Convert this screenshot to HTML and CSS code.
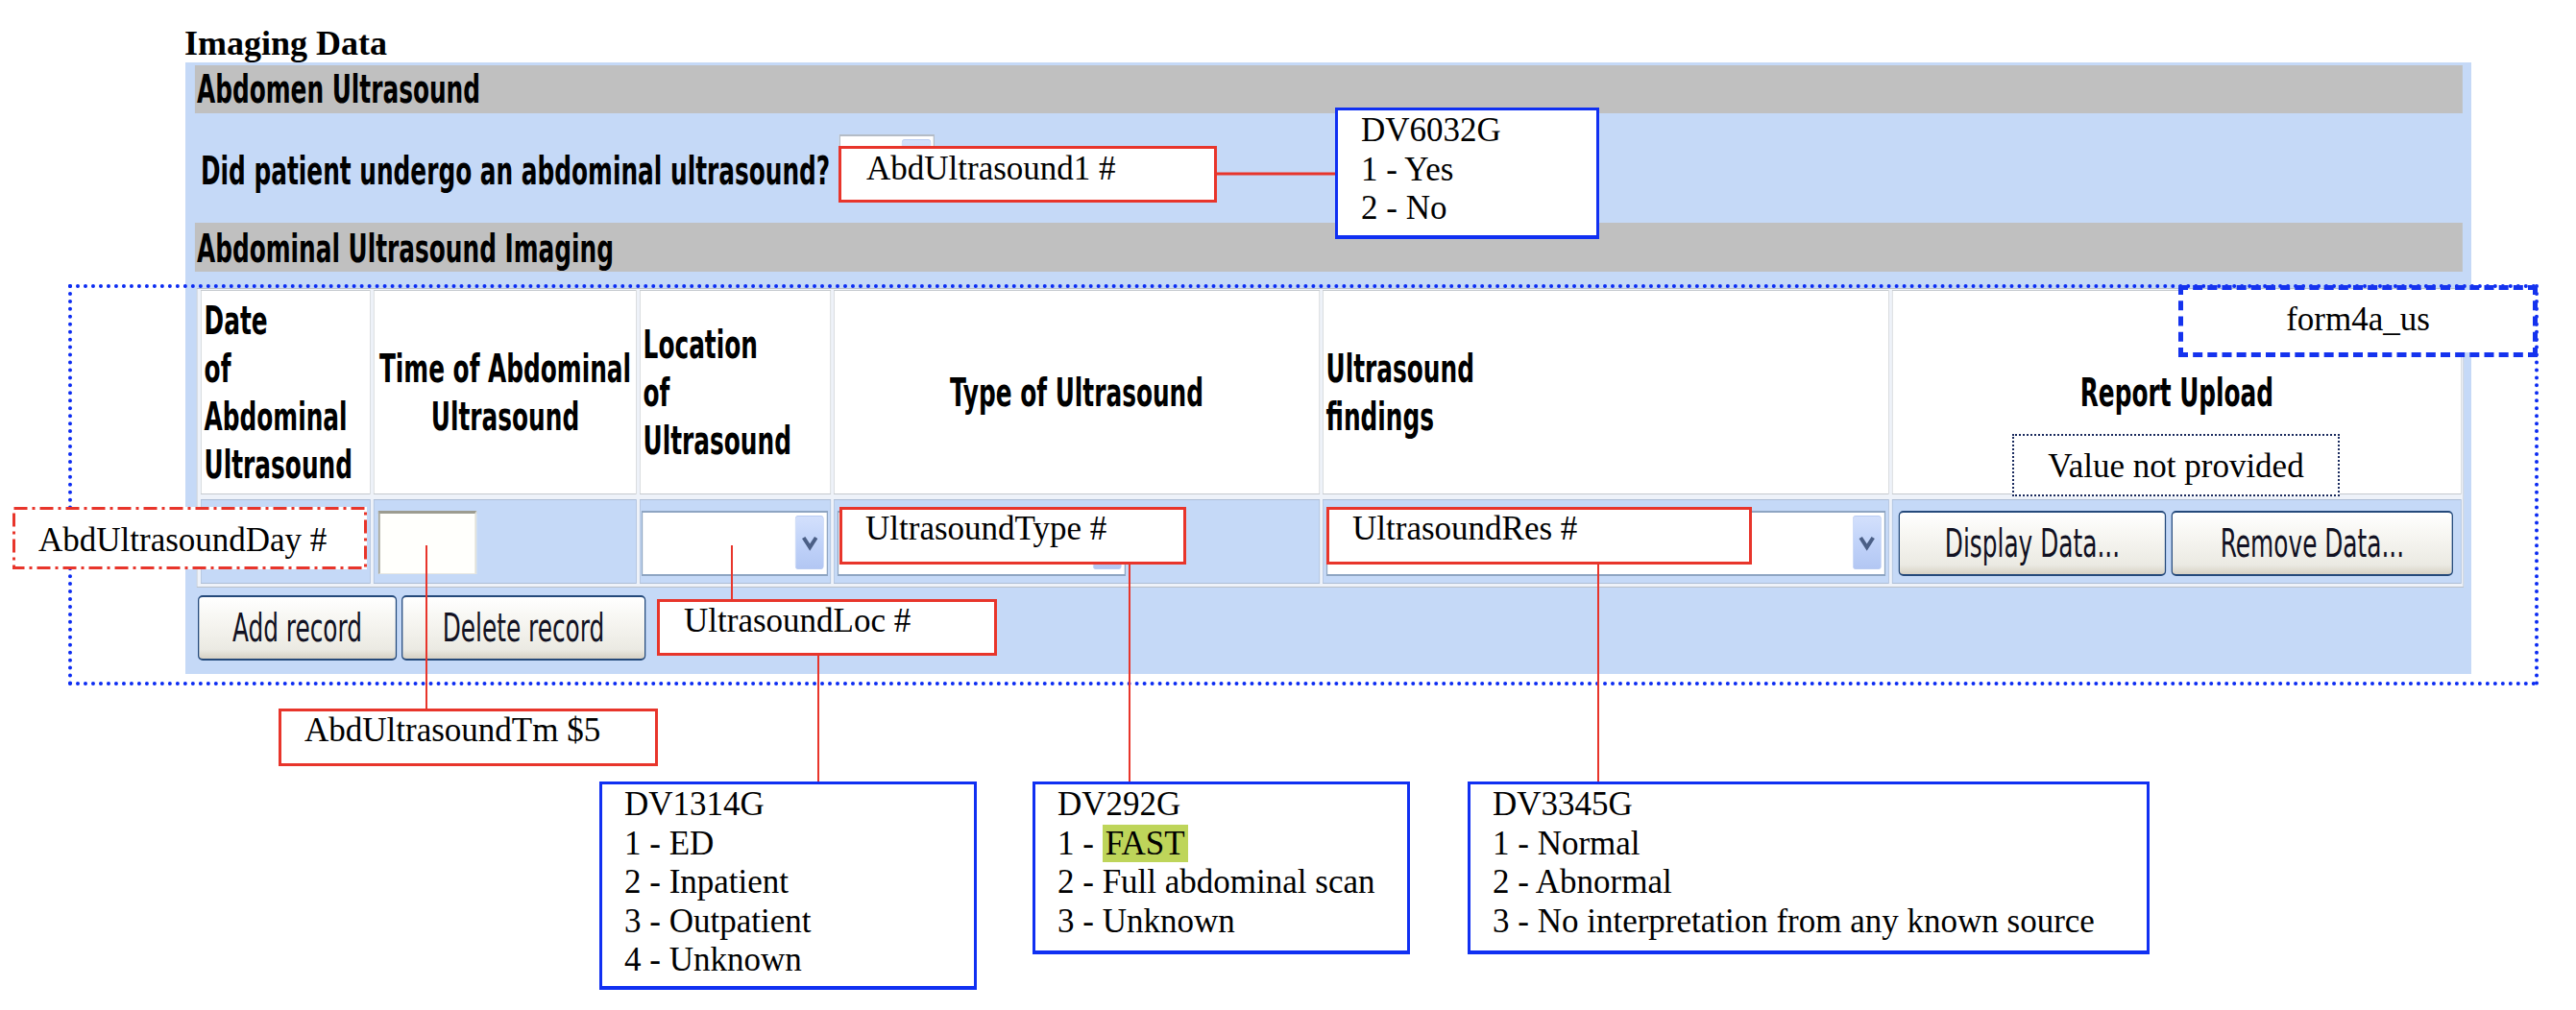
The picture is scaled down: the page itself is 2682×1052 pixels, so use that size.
FILE: index.html
```html
<!DOCTYPE html>
<html>
<head>
<meta charset="utf-8">
<title>Imaging Data</title>
<link rel="stylesheet" href="styles.css">
</head>
<body>
<div class="page">
  <h1 class="title">Imaging Data</h1>
  <div class="panel-wrap">
    <div class="panel">
      <div class="bar">Abdomen Ultrasound</div>
      <div class="question">
        <span class="q-label">Did patient undergo an abdominal ultrasound?</span>
        <div class="sel sel-q"><span class="dd"><svg class="chev" viewBox="0 0 17 20" preserveAspectRatio="none"><path d="M2 5 L8.5 15 L15 5"/></svg></span></div>
      </div>
      <div class="bar bar2">Abdominal Ultrasound Imaging</div>
      <div class="grid">
        <div class="th">Date<br>of<br>Abdominal<br>Ultrasound</div>
        <div class="th center">Time of Abdominal<br>Ultrasound</div>
        <div class="th">Location<br>of<br>Ultrasound</div>
        <div class="th center">Type of Ultrasound</div>
        <div class="th">Ultrasound<br>findings</div>
        <div class="th center">Report Upload</div>

        <div class="td"></div>
        <div class="td td2"><div class="input"></div></div>
        <div class="td td3"><div class="sel sel3"><span class="dd"><svg class="chev" viewBox="0 0 17 20" preserveAspectRatio="none"><path d="M2 5 L8.5 15 L15 5"/></svg></span></div></div>
        <div class="td td4"><div class="sel sel4"><span class="dd"><svg class="chev" viewBox="0 0 17 20" preserveAspectRatio="none"><path d="M2 5 L8.5 15 L15 5"/></svg></span></div></div>
        <div class="td td4"><div class="sel sel5"><span class="dd"><svg class="chev" viewBox="0 0 17 20" preserveAspectRatio="none"><path d="M2 5 L8.5 15 L15 5"/></svg></span></div></div>
        <div class="td td6"><button class="btn btn-disp">Display Data...</button><button class="btn btn-rem">Remove Data...</button></div>
      </div>
      <div class="actions">
        <button class="btn btn-add">Add record</button>
        <button class="btn btn-del">Delete record</button>
      </div>
    </div>
  </div>
</div>

<div class="overlay">
  <div class="frame"></div>
  <svg class="wires" width="2682" height="1052" viewBox="0 0 2682 1052">
    <line class="w-thick" x1="1267" y1="181" x2="1391" y2="181"/>
    <line x1="444" y1="568" x2="444" y2="738"/>
    <line x1="762" y1="568" x2="762" y2="624"/>
    <line x1="852" y1="683" x2="852" y2="814"/>
    <line x1="1176" y1="588" x2="1176" y2="814"/>
    <line x1="1664" y1="588" x2="1664" y2="814"/>
  </svg>

  <div class="note red n-q">AbdUltrasound1 #</div>
  <div class="note blue n-dv6032">DV6032G<br>1 - Yes<br>2 - No</div>
  <div class="note n-day">
    <svg class="dashdot" width="369" height="65" viewBox="0 0 369 65"><rect x="1.5" y="1.5" width="366" height="62"/></svg>
    <span class="note-text">AbdUltrasoundDay #</span>
  </div>
  <div class="note red n-tm">AbdUltrasoundTm $5</div>
  <div class="note red n-loc">UltrasoundLoc #</div>
  <div class="note red n-type">UltrasoundType #</div>
  <div class="note red n-res">UltrasoundRes #</div>
  <div class="note blue n-dv1314">DV1314G<br>1 - ED<br>2 - Inpatient<br>3 - Outpatient<br>4 - Unknown</div>
  <div class="note blue n-dv292">DV292G<br>1 - <mark class="hl">FAST</mark><br>2 - Full abdominal scan<br>3 - Unknown</div>
  <div class="note blue n-dv3345">DV3345G<br>1 - Normal<br>2 - Abnormal<br>3 - No interpretation from any known source</div>
  <div class="note n-vnp">Value not provided</div>
  <div class="note n-form">form4a_us</div>
</div>
</body>
</html>
```
FILE: styles.css
```css
* { box-sizing: border-box; }

html, body {
  margin: 0;
  padding: 0;
  background: #ffffff;
  overflow: hidden;
}

body {
  position: relative;
  width: 2682px;
  height: 1052px;
  font-family: "Liberation Serif", "Times New Roman", serif;
  color: #000;
}

.page {
  padding-top: 25px;
}

.title {
  margin: 0 0 0 192px;
  font: bold 36px/40px "Liberation Serif", serif;
}

/* ---------- the form screenshot (horizontally compressed) ---------- */
.panel-wrap {
  --s: 0.62;
  --u: calc(1px / var(--s));
  margin-left: 193px;
  width: 2380px;
  height: 637px;
  overflow: hidden;
}

.panel {
  width: calc(2380 * var(--u));
  height: 637px;
  transform: scaleX(var(--s));
  transform-origin: 0 0;
  background: #c5d9f7;
  padding: 3px calc(9 * var(--u)) 0 calc(10 * var(--u));
  font-family: "DejaVu Sans", Verdana, sans-serif;
  color: #000;
}

.bar {
  height: 50px;
  background: #c0c0c0;
  padding-left: calc(2 * var(--u));
  font-weight: bold;
  font-size: 40px;
  line-height: 50px;
  white-space: nowrap;
}

.bar2 {
  height: 51px;
  padding-top: 2px;
}

.question {
  height: 114px;
  display: flex;
  align-items: flex-start;
  padding-left: calc(6 * var(--u));
}

.q-label {
  width: calc(665 * var(--u));
  margin-top: 35px;
  font-weight: bold;
  font-size: 40px;
  line-height: 50px;
  white-space: nowrap;
}

.sel {
  height: 68px;
  border: 2px solid #8ea5c2;
  background: #ffffff;
  display: flex;
  justify-content: flex-end;
  padding: 3px calc(2.8 * var(--u)) 5px 0;
}

.sel-q {
  width: calc(99 * var(--u));
  margin-top: 22px;
  border-color: #b4bcc6;
}

.sel3 { width: calc(194 * var(--u)); }
.sel4 { width: calc(300 * var(--u)); }
.sel5 { width: calc(582 * var(--u)); }

.dd {
  width: calc(30 * var(--u));
  border: 1px solid #b9cbf2;
  border-radius: calc(3 * var(--u)) / 4px;
  background: linear-gradient(180deg, #d3e0fc 0%, #c1d3f9 50%, #b3c7f3 100%);
  display: flex;
  align-items: center;
  justify-content: center;
}

.chev {
  width: calc(17 * var(--u));
  height: 20px;
}

.chev path {
  fill: none;
  stroke: #4b5f86;
  stroke-width: 4;
}

.grid {
  margin: 17px 0 0 calc(2 * var(--u));
  width: calc(2360 * var(--u));
  display: grid;
  grid-template-columns:
    calc(177 * var(--u))
    calc(274 * var(--u))
    calc(199 * var(--u))
    calc(506 * var(--u))
    calc(590 * var(--u))
    calc(593 * var(--u));
  grid-template-rows: 213px 88px;
  column-gap: calc(3 * var(--u));
  row-gap: 5px;
  border: 1px solid #b9c0c9;
  padding: 1px calc(1.4 * var(--u)) 3px calc(3.4 * var(--u));
  background: #eef2f9;
}

.th {
  background: #ffffff;
  border: 1px solid #c6cace;
  display: flex;
  align-items: center;
  padding: 0 calc(3 * var(--u));
  font-weight: bold;
  font-size: 40px;
  line-height: 50px;
  white-space: nowrap;
}

.th.center {
  justify-content: center;
  text-align: center;
}

.td {
  background: #c5d9f7;
  border: 1px solid #adbdd5;
  padding-top: 11px;
  display: flex;
  align-items: flex-start;
}

.td2 { padding-left: calc(4.4 * var(--u)); }
.td3 { padding-left: calc(1.4 * var(--u)); }
.td4 { padding-left: calc(3.4 * var(--u)); }
.td6 {
  padding-left: calc(6.4 * var(--u));
  gap: calc(6 * var(--u));
}

.input {
  width: calc(102 * var(--u));
  height: 66px;
  border-style: solid;
  border-width: 3px calc(2 * var(--u)) 1px calc(2 * var(--u));
  border-color: #9c9c90 #e2e2da #e8e8e2 #a9a99d;
  background: #fffffc;
}

.btn {
  height: 68px;
  margin: 0;
  padding: 0;
  border: 2px solid #24497a;
  border-radius: calc(5 * var(--u)) / 5px;
  background: linear-gradient(180deg, #ffffff 0%, #f5f4ef 45%, #ebeae3 85%, #d6d1c4 100%);
  font-family: "DejaVu Sans", Verdana, sans-serif;
  font-size: 40px;
  line-height: 1;
  color: #111122;
  display: flex;
  align-items: center;
  justify-content: center;
  white-space: nowrap;
}

.btn-disp { width: calc(278 * var(--u)); }
.btn-rem { width: calc(293 * var(--u)); }
.btn-add { width: calc(207 * var(--u)); }
.btn-del { width: calc(254 * var(--u)); }

.actions {
  display: flex;
  gap: calc(5 * var(--u));
  margin: 8px 0 0 calc(3 * var(--u));
}

/* ---------- annotation overlay ---------- */
.overlay {
  position: absolute;
  left: 0;
  top: 0;
  width: 2682px;
  height: 1052px;
  pointer-events: none;
}

.frame {
  position: absolute;
  left: 71px;
  top: 296px;
  width: 2572px;
  height: 418px;
  border: 4px dotted #0c2cf2;
}

.wires {
  position: absolute;
  left: 0;
  top: 0;
}

.wires line {
  stroke: #e8352b;
  stroke-width: 2;
}

.wires .w-thick {
  stroke-width: 3;
}

.note {
  position: absolute;
  background: #ffffff;
  font-family: "Liberation Serif", "Times New Roman", serif;
  font-size: 35px;
  line-height: 40px;
  color: #000;
  white-space: nowrap;
}

.note.red {
  border: 3px solid #e8352b;
}

.note.blue {
  border: 3px solid #1030f2;
  border-bottom-width: 4px;
  line-height: 40.6px;
}

.n-q { left: 873px; top: 152px; width: 394px; height: 59px; padding: 1px 0 0 26px; }
.n-dv6032 { left: 1390px; top: 112px; width: 275px; height: 137px; padding: 1px 0 0 24px; }

.n-day { left: 13px; top: 528px; width: 369px; height: 65px; padding: 15px 0 0 27px; }
.dashdot {
  position: absolute;
  left: 0;
  top: 0;
}
.dashdot rect {
  fill: none;
  stroke: #e8352b;
  stroke-width: 3;
  stroke-dasharray: 14 5 3 5;
}
.note-text {
  position: relative;
}

.n-tm { left: 290px; top: 738px; width: 395px; height: 60px; padding: 0 0 0 24px; }
.n-loc { left: 684px; top: 624px; width: 354px; height: 59px; padding: 0 0 0 25px; }
.n-type { left: 874px; top: 528px; width: 361px; height: 60px; padding: 0 0 0 24px; }
.n-res { left: 1381px; top: 528px; width: 443px; height: 60px; padding: 0 0 0 24px; }

.n-dv1314 { left: 624px; top: 814px; width: 393px; height: 217px; padding: 1px 0 0 23px; }
.n-dv292 { left: 1075px; top: 814px; width: 393px; height: 180px; padding: 1px 0 0 23px; }
.n-dv3345 { left: 1528px; top: 814px; width: 710px; height: 180px; padding: 1px 0 0 23px; }

.hl {
  background: #bed55a;
  color: #000;
  padding: 0 3px;
}

.n-vnp {
  left: 2095px;
  top: 452px;
  width: 341px;
  height: 65px;
  border: 2px dotted #1b2b5e;
  padding-top: 12px;
  text-align: center;
}

.n-form {
  left: 2268px;
  top: 297px;
  width: 374px;
  height: 75px;
  border: 5px dashed #1533ee;
  background-clip: padding-box;
  padding-top: 11px;
  text-align: center;
}
```
